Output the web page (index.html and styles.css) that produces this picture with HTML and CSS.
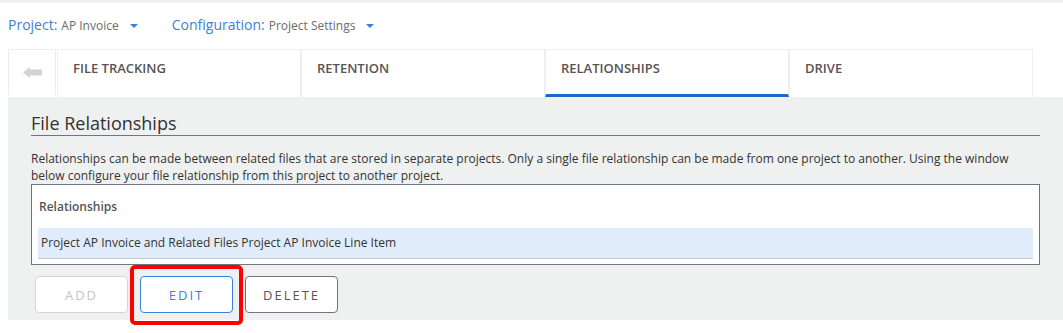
FILE: index.html
```html
<!DOCTYPE html>
<html lang="en">
<head>
  <meta charset="UTF-8">
  <meta name="viewport" content="width=device-width, initial-scale=1.0">
  <title>Project Settings</title>
  <link rel="stylesheet" href="styles.css">
</head>
<body>
  <div class="top-strip"></div>

  <div class="selectors">
    <div class="selector">
      <span class="selector-label">Project:</span>
      <span class="selector-value">AP Invoice</span>
      <span class="caret"></span>
    </div>
    <div class="selector">
      <span class="selector-label">Configuration:</span>
      <span class="selector-value">Project Settings</span>
      <span class="caret"></span>
    </div>
  </div>

  <div class="tabs">
    <div class="back-tab">
      <svg width="19" height="11" viewBox="0 0 19 11">
        <path d="M0 5.5 L7 0 L7 2.5 L19 2.5 L19 8.5 L7 8.5 L7 11 Z" fill="#d3d3d3"/>
      </svg>
    </div>
    <div class="tab">FILE TRACKING</div>
    <div class="tab">RETENTION</div>
    <div class="tab active">RELATIONSHIPS</div>
    <div class="tab">DRIVE</div>
  </div>

  <div class="panel">
    <h2 class="panel-title">File Relationships</h2>
    <p class="description">Relationships can be made between related files that are stored in separate projects. Only a single file relationship can be made from one project to another. Using the window below configure your file relationship from this project to another project.</p>

    <div class="list-box">
      <div class="list-header">Relationships</div>
      <div class="list-row">Project AP Invoice and Related Files Project AP Invoice Line Item</div>
    </div>

    <div class="buttons">
      <button class="btn btn-disabled">ADD</button>
      <div class="highlight-wrap">
        <button class="btn btn-primary">EDIT</button>
        <div class="highlight"></div>
      </div>
      <button class="btn btn-default">DELETE</button>
    </div>
  </div>
</body>
</html>
```

FILE: styles.css
```css
body {
  margin: 0;
  padding-bottom: 13px;
  background: #fff;
  font-family: "Open Sans", "Liberation Sans", sans-serif;
  color: #333;
}
.top-strip {
  height: 3px;
  background-color: #eff1f0;
}

/* project / configuration pickers */
.selectors {
  display: flex;
  align-items: center;
  gap: 34px;
  height: 38px;
  padding: 0 8px;
  margin-top: 2px;
}
.selector {
  display: flex;
  align-items: baseline;
}
.selector-label {
  font-size: 14px;
  color: #3f7fd6;
}
.selector-value {
  font-size: 12px;
  color: #6b6b6b;
  margin-left: 4px;
}
.caret {
  width: 0;
  height: 0;
  border-left: 4px solid transparent;
  border-right: 4px solid transparent;
  border-top: 4px solid #3f7fd6;
  margin-left: 11px;
  position: relative;
  top: -2px;
}

/* tab bar */
.tabs {
  display: flex;
  margin: 6px 0 0 8px;
  height: 48px;
}
.back-tab {
  width: 46px;
  height: 45px;
  border: 1px solid #ececec;
  border-bottom: none;
  display: flex;
  justify-content: center;
  align-items: center;
  margin-right: 1px;
}
.tab {
  width: 244px;
  box-sizing: border-box;
  border: 1px solid #efefef;
  border-bottom: none;
  padding: 9px 0 0 15px;
  font-size: 13px;
  font-weight: 600;
  color: #555;
}
.tab.active {
  border-bottom: 3px solid #1f67d0;
}

/* content panel */
.panel {
  margin-left: 8px;
  background-color: #eff1f0;
  padding: 14px 23px 7px;
  height: 202px;
}
.panel-title {
  margin: 0;
  font-size: 18px;
  font-weight: 400;
  line-height: 24px;
  color: #333;
  border-bottom: 1px solid #6b7584;
}
.description {
  margin: 14px 0 0;
  font-size: 12px;
  line-height: 17px;
  color: #333;
}
.list-box {
  background: #fff;
  border: 1px solid #6b7584;
  padding: 0 6px 5px;
}
.list-header {
  height: 43px;
  line-height: 43px;
  font-size: 12px;
  font-weight: 600;
  color: #555;
  padding-left: 1px;
}
.list-row {
  height: 30px;
  line-height: 30px;
  background-color: #e1ecfb;
  border-bottom: 1px solid #c3cbd4;
  font-size: 12px;
  color: #333;
  padding-left: 3px;
}

/* buttons */
.buttons {
  display: flex;
  gap: 12px;
  margin: 11px 0 0 4px;
}
.btn {
  width: 93px;
  height: 37px;
  background: #fff;
  border-radius: 4px;
  font-family: "Open Sans", "Liberation Sans", sans-serif;
  font-size: 13px;
  letter-spacing: 2px;
  cursor: pointer;
}
.btn-disabled {
  border: 1px solid #d2d4d6;
  color: #c2c4c6;
}
.btn-primary {
  border: 1px solid #3b82e0;
  color: #3b82e0;
}
.btn-default {
  border: 1px solid #6b7584;
  color: #555;
}
.highlight-wrap {
  position: relative;
}
.highlight {
  position: absolute;
  left: -10px;
  top: -11px;
  width: 105px;
  height: 52px;
  border: 4px solid #f00;
  border-radius: 5px;
}
```
